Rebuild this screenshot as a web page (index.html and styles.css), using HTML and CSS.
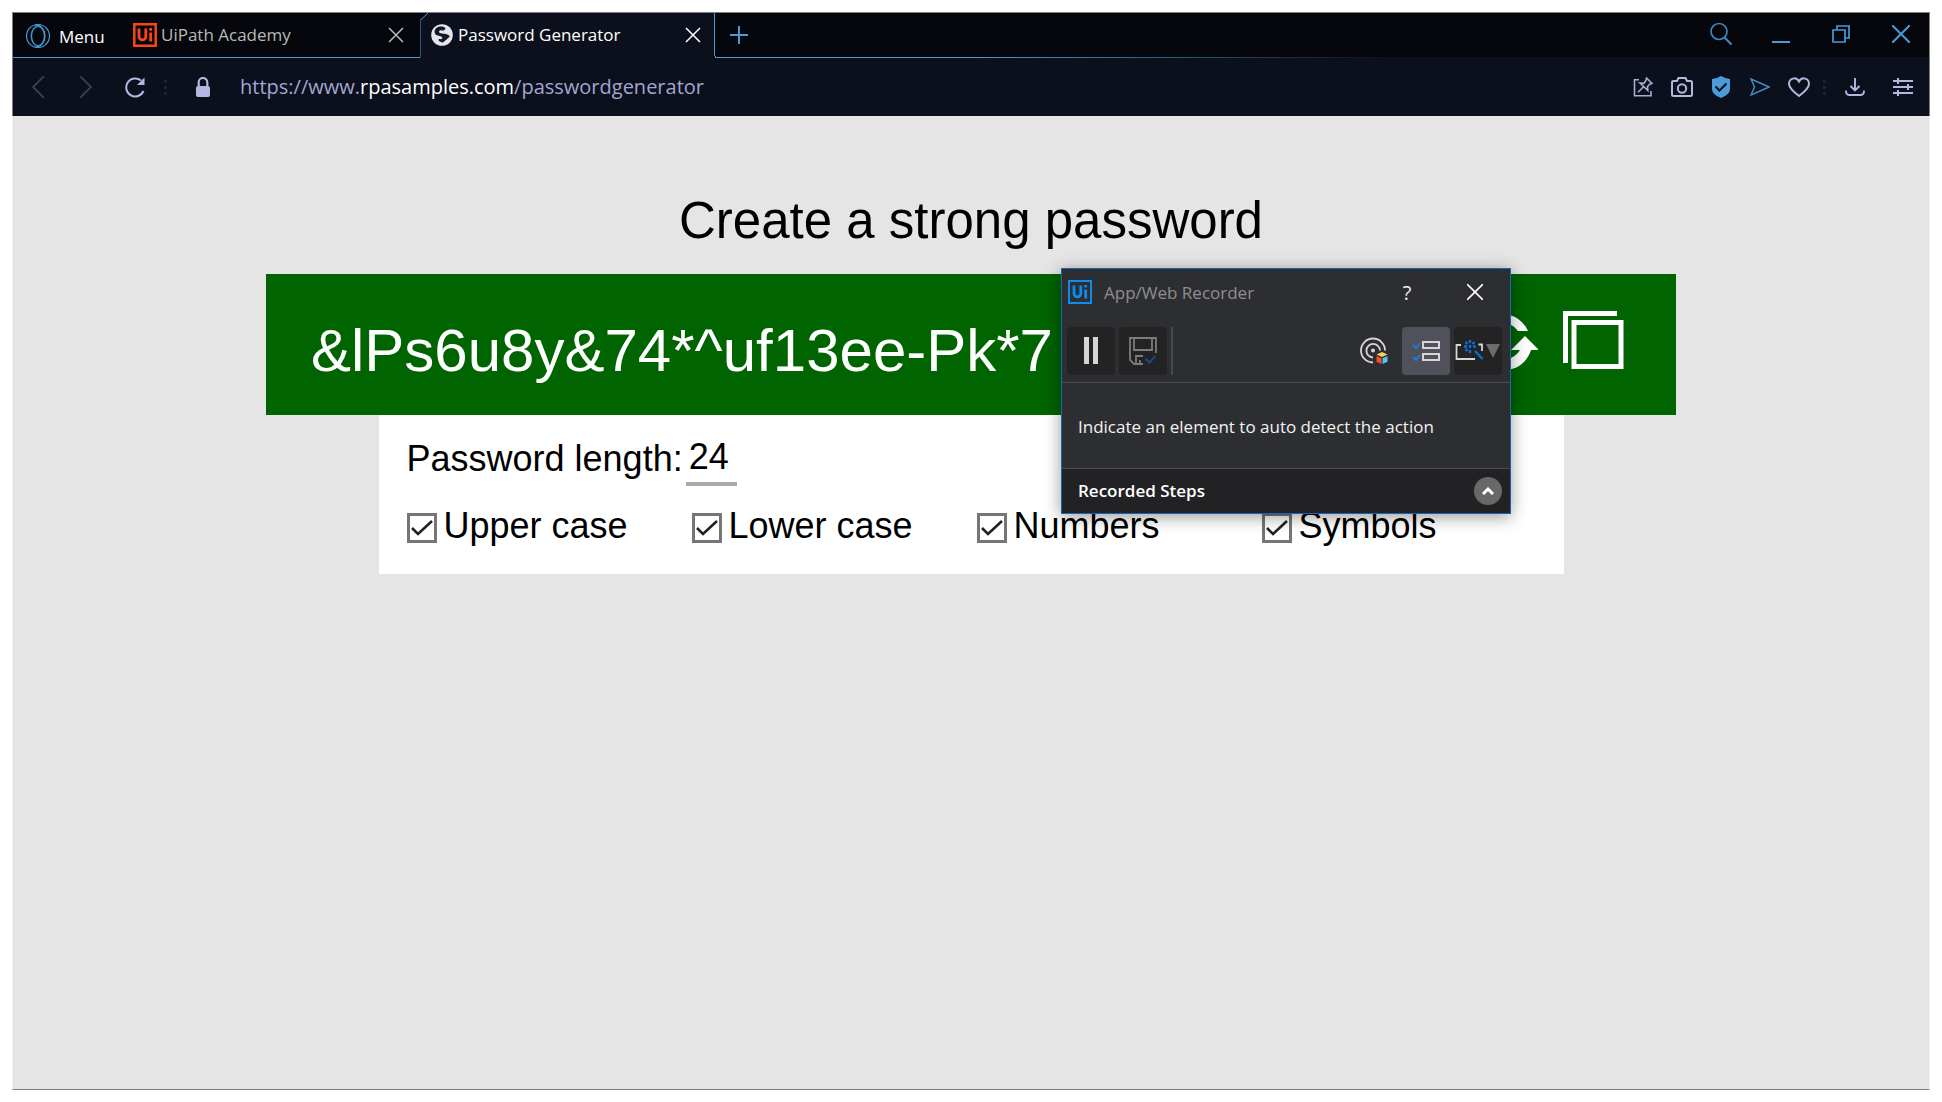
FILE: index.html
```html
<!DOCTYPE html>
<html lang="en">
<head>
<meta charset="utf-8">
<title>Password Generator</title>
<link rel="stylesheet" href="styles.css">
</head>
<body>
<div class="window">
  <header class="chrome">
    <div class="tabbar">
      <button class="menu" type="button">
        <svg width="26" height="26" viewBox="0 0 26 26" fill="none" stroke="#4a9bd8" stroke-width="1.2"><circle cx="13" cy="13" r="11.5"/><ellipse cx="13" cy="13" rx="6.500" ry="9.500"/><path d="M10 1.800C17 2 20 8 20 13s-3 11-10 11.200"/><path d="M16 1.800C9 2 6 8 6 13s3 11 10 11.200" opacity=".5"/></svg>
        <span>Menu</span>
      </button>
      <div class="tab">
        <svg class="logo" width="24" height="24" viewBox="0 0 24 24"><path fill="none" stroke="#fa4616" stroke-width="2.500" d="M1.300 1.300h21.400v21.400H1.300z"/><path fill="none" stroke="#fa4616" stroke-width="2.800" d="M6 5.500v8a3.400 3.400 0 0 0 6.800 0v-8M17.700 9.500V18.500M17.700 5v2.700"/></svg>
        <span class="tab-title">UiPath Academy</span>
        <button class="tab-close" type="button" aria-label="Close tab"><svg width="16" height="16" viewBox="0 0 16 16" stroke="currentColor" stroke-width="1.500"><path d="M1 1l14 14M15 1L1 15"/></svg></button>
      </div>
      <div class="tab active">
        <svg class="outline" width="300" height="45" viewBox="0 0 300 45"><path fill="#0c0f1c" d="M0 45V7.500L8 0h287v45z"/><path fill="none" stroke="#4a9bd8" d="M0 44.500V7.500L8 0M294.500 0v42.500l2 2h3.500"/></svg>
        <svg class="logo" width="24" height="24" viewBox="0 0 24 24"><circle cx="12" cy="12" r="10.800" fill="#e3e6ec"/><path fill="#161925" d="M12.500 3.500C8 3 5 5 4.500 8.500c0 2.500 1.500 3.800 4 4.300 2 .4 3.500.7 3.800 1.900.2 1.500-1.500 1.600-3.300 1.300-1 .5-.5 1.500.5 2.300 1.500 1.200 3.500 1.700 4.500.4.800-1.200 2.500-1.700 3.500-3.200 1-.8 2-1.500 2.200-2.300-.7-1.200-2-1.400-3.200-1.900-2-.8-4.300-.3-6.300-1.200-1.200-.6-1.700-1.900-.5-2.700 1.200-.7 2.500.7 3.800 0 1.300-.6 2.600-1.600 1.500-2.700-.6-.7-1.400-1-2.500-1.200z"/></svg>
        <span class="tab-title">Password Generator</span>
        <button class="tab-close" type="button" aria-label="Close tab"><svg width="16" height="16" viewBox="0 0 16 16" stroke="currentColor" stroke-width="1.500"><path d="M1 1l14 14M15 1L1 15"/></svg></button>
      </div>
      <button class="newtab" type="button" aria-label="New tab"><svg width="18" height="18" viewBox="0 0 18 18" stroke="#4a9bd8" stroke-width="2"><path d="M9 0v18M0 9h18"/></svg></button>
      <div class="winctl">
        <button type="button" aria-label="Search tabs"><svg width="24" height="24" viewBox="0 0 24 24" fill="none" stroke="#3f86bb" stroke-width="1.700"><circle cx="10" cy="9.500" r="8"/><path stroke-width="2.200" d="M15.500 15.500l7 7"/></svg></button>
        <button type="button" aria-label="Minimise"><svg width="18" height="18" viewBox="0 0 18 18" stroke="#4a9bd8" stroke-width="2"><path d="M0 17h18"/></svg></button>
        <button type="button" aria-label="Restore"><svg width="18" height="18" viewBox="0 0 18 18" fill="none" stroke="#4a9bd8" stroke-width="1.700"><path d="M1 5h12v12H1zM5 4.500V1h12v12h-3.500"/></svg></button>
        <button type="button" aria-label="Close"><svg width="18" height="18" viewBox="0 0 18 18" stroke="#4a9bd8" stroke-width="2"><path d="M0 0l18 18M18 0L0 18"/></svg></button>
      </div>
    </div>
    <div class="toolbar">
      <button class="nav" type="button" aria-label="Back"><svg width="14" height="22" viewBox="0 0 14 22" fill="none" stroke="#3b3e55" stroke-width="1.800"><path d="M13 0L2 11l11 11"/></svg></button>
      <button class="nav" type="button" aria-label="Forward"><svg width="14" height="22" viewBox="0 0 14 22" fill="none" stroke="#3b3e55" stroke-width="1.800"><path d="M1 0l11 11L1 22"/></svg></button>
      <button class="nav reload" type="button" aria-label="Reload"><svg width="22" height="22" viewBox="0 0 22 22" fill="none" stroke="#b4b7e0" stroke-width="2"><path d="M17 4.500a9 9 0 1 0 2.500 10.500"/><path fill="#b4b7e0" stroke="none" d="M20.500 1.500V9h-7.500z"/></svg></button>
      <svg class="dots" width="3" height="15" viewBox="0 0 3 15" fill="#1e2238"><path d="M0 0h3v3H0zM0 6h3v3H0zM0 12h3v3H0z"/></svg>
      <svg class="lock" width="14" height="20" viewBox="0 0 14 20"><path fill="none" stroke="#b4b7e0" stroke-width="2.200" d="M2.700 10V5.300a4.300 4.300 0 0 1 8.600 0V10"/><rect y="9" width="14" height="11" rx="2" fill="#b4b7e0"/></svg>
      <div class="url">https://www.<b>rpasamples.com</b>/passwordgenerator</div>
      <div class="tools">
        <button type="button" aria-label="Pin page"><svg width="20" height="20" viewBox="0 0 20 20" fill="none" stroke="#a9acd4" stroke-width="1.600"><path d="M6 2.800H1.500v16h16.500V14"/><path d="M13.500 1l5.500 5.500-2 .5-2.500 2.500.3 4L7 6l4 .3L13.200 3zM10.500 9.800L5 15.300"/></svg></button>
        <button type="button" aria-label="Snapshot"><svg width="22" height="20" viewBox="0 0 22 20" fill="none" stroke="#b4b7e0" stroke-width="2"><path d="M2.500 4H6l1.500-3h7L16 4h3.500Q21 4 21 5.500v12q0 1.500-1.500 1.500h-17Q1 19 1 17.500v-12Q1 4 2.500 4z"/><circle cx="11" cy="11.500" r="4.200"/></svg></button>
        <button type="button" aria-label="Blocker"><svg width="18" height="22" viewBox="0 0 18 22"><path fill="#4a9bd8" d="M9 0q4 2.500 9 3v10q0 5.500-9 9-9-3.500-9-9V3q5-.500 9-3z"/><path fill="none" stroke="#0c0f1c" stroke-width="2" d="M3.500 10.500l4 4 7-7"/></svg></button>
        <button type="button" aria-label="My Flow"><svg width="20" height="18" viewBox="0 0 20 18" fill="none" stroke="#4289bd" stroke-width="1.500"><path d="M1 1l18 8L1 17l3.500-8z"/></svg></button>
        <button type="button" aria-label="Bookmark"><svg width="22" height="20" viewBox="0 0 22 20" fill="none" stroke="#b4b7e0" stroke-width="2"><path d="M11 19C5 14.500 1 11 1 6.800 1 1.500 8-1 11 4.500 14-1 21 1.500 21 6.800 21 11 17 14.500 11 19z"/></svg></button>
        <svg class="dots" width="3" height="15" viewBox="0 0 3 15" fill="#1e2238"><path d="M0 0h3v3H0zM0 6h3v3H0zM0 12h3v3H0z"/></svg>
        <button class="wide" type="button" aria-label="Downloads"><svg width="20" height="18" viewBox="0 0 20 18" fill="none" stroke="#b4b7e0" stroke-width="1.900"><path d="M10 0v12M5.500 8l4.500 4.500L14.500 8M1 12.500Q1 17 4 17h12q3 0 3-4.500"/></svg></button>
        <button class="wide" type="button" aria-label="Easy setup"><svg width="20" height="18" viewBox="0 0 20 18" fill="none" stroke="#b4b7e0" stroke-width="2"><path d="M0 3h20M0 9h20M0 15h20M5 0v6M15 6v6M5 12v6"/></svg></button>
      </div>
    </div>
  </header>

  <main class="page">
    <h1>Create a strong password</h1>
    <section class="result">
      <output class="password">&amp;lPs6u8y&amp;74*^uf13ee-Pk*7</output>
      <div class="actions">
        <button type="button" aria-label="Generate again"><svg width="70" height="60" viewBox="0 0 70 60" fill="#fff"><path d="M8 22A28 28 0 0 1 60 21H50A19 19 0 0 0 18 22l6 4H0L14 12zM57 26l14 14h-8A28 28 0 0 1 20 55l6-8A19 19 0 0 0 52 40h-9z"/></svg></button>
        <button type="button" aria-label="Copy password"><svg width="62" height="60" viewBox="0 0 62 60" fill="none" stroke="#fff" stroke-width="5"><path d="M55 3.500H3.500V53M12 12.500h47v44H12z"/></svg></button>
      </div>
    </section>
    <form class="options">
      <div class="length">
        <label for="len">Password length:</label>
        <input id="len" type="text" value="24">
      </div>
      <div class="checks">
        <label><input type="checkbox" checked><span>Upper case</span></label>
        <label><input type="checkbox" checked><span>Lower case</span></label>
        <label><input type="checkbox" checked><span>Numbers</span></label>
        <label><input type="checkbox" checked><span>Symbols</span></label>
      </div>
    </form>
  </main>

  <aside class="recorder">
    <div class="rec-title">
      <svg width="24" height="24" viewBox="0 0 24 24" fill="none" stroke="#0a8cf0"><path stroke-width="2" d="M1 1h22v22H1z"/><path stroke-width="2.800" d="M6 5.500v8a3.400 3.400 0 0 0 6.800 0v-8M17.700 9.500V18.500M17.700 5v2.500"/></svg>
      <span class="rec-name">App/Web Recorder</span>
      <button class="help" type="button">?</button>
      <button class="rec-close" type="button" aria-label="Close recorder"><svg width="16" height="16" viewBox="0 0 16 16" stroke="#fff" stroke-width="1.600"><path d="M0 0l16 16M16 0L0 16"/></svg></button>
    </div>
    <div class="rec-tools">
      <button class="sq" type="button" aria-label="Pause"><svg width="14" height="28" viewBox="0 0 14 28" fill="#d6d6d6"><path d="M0 0h5v27H0zM9 0h5v27H9z"/></svg></button>
      <button class="sq" type="button" aria-label="Save"><svg width="28" height="28" viewBox="0 0 28 28" fill="none" stroke="#7c7c7c" stroke-width="1.800"><path d="M27 16V1H1v22l4 4h9M5 1v12h18V1M7 27v-8h7M11 27v-4"/><path stroke="#1a4a86" stroke-width="2.200" d="M16.500 21.500l4 4 6-6.500"/></svg></button>
      <span class="sep"></span>
      <button class="sq plain" type="button" aria-label="Target"><svg width="28" height="28" viewBox="0 0 28 28" fill="none" stroke="#d6d6d6" stroke-width="1.800"><path d="M13 25.500A12 12 0 1 1 25 13.500"/><path d="M13 20.500A6.800 6.800 0 1 1 20 13.500"/><circle cx="13" cy="13.500" r="2" fill="#d6d6d6" stroke="none"/><g stroke="none"><path fill="#f7d25c" d="M22 15l5.500 2.500L22 20l-5.500-2.500z"/><path fill="#f4511e" d="M16.500 19l5 2.300V27l-5-2.300z"/><path fill="#4fc3f7" d="M27.500 19l-5 2.300V27l5-2.300z"/></g></svg></button>
      <button class="sq on" type="button" aria-label="Steps panel"><svg width="28" height="22" viewBox="0 0 28 22" fill="none" stroke="#d6d6d6" stroke-width="2"><path d="M11 2h16v6H11zM11 14h16v6H11z"/><path stroke="#1c7be0" d="M1 5l3 3 4-5M1 17l3 3 4-5"/></svg></button>
      <button class="sq" type="button" aria-label="Detection mode"><svg width="46" height="24" viewBox="0 0 46 24" fill="none"><path stroke="#d6d6d6" stroke-width="1.800" d="M6 6H1.500v14H20M23.500 5.500H27V12"/><path fill="#6c6c6c" d="M31 5h14l-7 14z"/><g stroke="#0b6fe0" stroke-width="2.400"><path d="M20 12l7.500 8"/><path d="M15 1v3M15 11v3M9 7.500h3M18 7.500h3M10.500 3l2 2M19.500 3l-2 2M10.500 12l2-2M15 6v3"/></g></svg></button>
    </div>
    <p class="rec-hint">Indicate an element to auto detect the action</p>
    <div class="rec-steps">
      <b>Recorded Steps</b>
      <button type="button" aria-label="Expand"><svg width="12" height="8" viewBox="0 0 12 8" fill="none" stroke="#fff" stroke-width="3"><path d="M1 7l5-5 5 5"/></svg></button>
    </div>
  </aside>
</div>
</body>
</html>
```
FILE: styles.css
```css
* { box-sizing: border-box; }

body {
  margin: 0;
  background: #fff;
  font-family: "Liberation Sans", Arial, sans-serif;
}

button {
  display: flex;
  align-items: center;
  justify-content: center;
  padding: 0;
  border: 0;
  background: none;
  color: inherit;
  font: inherit;
}

svg { display: block; flex: none; }

.window {
  position: relative;
  display: flex;
  flex-direction: column;
  min-height: calc(100vh - 24px);
  margin: 12px;
}

/* Browser chrome */
.chrome {
  border: 1px solid #7f7f7f;
  border-bottom: 0;
  background: #0c0f1c;
  font-family: "Open Sans", "Noto Sans", sans-serif;
}

.tabbar {
  display: flex;
  height: 45px;
  background:
    linear-gradient(90deg, #4a9bd8 50%, #0c0f1c 72%) bottom / 100% 1px no-repeat,
    #06070c;
}

.menu {
  width: 112px;
  gap: 8px;
  padding: 0 20px 0 12px;
  justify-content: flex-start;
  color: #fff;
  font-size: 17px;
}

.menu span { padding-top: 2px; }

.tab {
  position: relative;
  display: flex;
  align-items: center;
  width: 295px;
  padding: 0 16px 2px 8px;
  color: #b9b9b9;
  font-size: 17px;
}

.tab.active { padding: 0 14px 2px 10px; color: #fff; }
.outline { position: absolute; inset: 0 auto auto 0; }
.logo, .tab-title, .tab-close { position: relative; }
.tab-title { margin-left: 4px; }
.tab-close { margin-left: auto; }

.newtab { width: 48px; padding-bottom: 2px; }

.winctl {
  display: flex;
  gap: 12px;
  margin-left: auto;
  padding: 0 4px 3px 0;
}

.winctl button { width: 48px; }

.toolbar {
  display: flex;
  align-items: center;
  height: 58px;
  padding: 0 2px 0 18px;
}

.nav { width: 14px; margin-right: 34px; }
.nav.reload { width: 22px; margin: 0 18px 0 -3px; }
.lock { margin: 0 30px 0 29px; }

.url {
  color: #a3a6d2;
  font-size: 20px;
  line-height: 28px;
}

.url b { color: #fff; font-weight: 400; }

.tools {
  display: flex;
  align-items: center;
  margin-left: auto;
}

.tools button { width: 39px; }
.tools .wide { width: 48px; }
.tools .dots { margin: 0 5px; }

/* Generator page */
.page {
  flex: 1;
  padding: 71px 0;
  border: 1px solid #f0f0f0;
  border-top: 0;
  border-bottom-color: #7f7f7f;
  background: #e5e5e5;
}

h1 {
  margin: 0 0 19px;
  font-size: 51px;
  font-weight: 400;
  line-height: 68px;
  text-align: center;
}

.result {
  display: flex;
  align-items: center;
  justify-content: space-between;
  width: 74%;
  max-width: 1410px;
  height: 141px;
  margin: 0 auto;
  padding: 0 52px 0 45px;
  background: #006400;
}

.password {
  padding-top: 12px;
  color: #fff;
  font-size: 60px;
  line-height: 70px;
}

.actions { display: flex; gap: 24px; padding-bottom: 9px; }

.options {
  width: 62%;
  max-width: 1185px;
  margin: 0 auto;
  padding: 20px 17px 27px 28px;
  background: #fff;
  font-size: 36px;
  line-height: 42px;
}

.length { display: flex; align-items: flex-start; }
.length label { padding-top: 3px; }

.length input {
  width: 51px;
  height: 51px;
  margin-left: 3px;
  padding: 0 0 3px 3px;
  border: 0;
  border-bottom: 4px solid #a9a9a9;
  background: none;
  font: inherit;
}

.checks {
  display: grid;
  grid-template-columns: repeat(4, 1fr);
  margin-top: 19px;
}

.checks label { display: flex; align-items: flex-start; }

.checks input {
  flex: none;
  width: 30px;
  height: 30px;
  margin: 8px 7px 0 0;
  appearance: none;
  border: 3px solid #767676;
  background: #fff;
}

.checks input:checked {
  background: #fff url("data:image/svg+xml,%3Csvg xmlns='http://www.w3.org/2000/svg' viewBox='0 0 24 24' fill='none' stroke='%23222' stroke-width='2.600'%3E%3Cpath d='M2 12l6 6L22 5'/%3E%3C/svg%3E");
}

/* Recorder window floating over the page */
.recorder {
  position: absolute;
  top: 256px;
  left: 1049px;
  width: 450px;
  border: 1px solid #1565b8;
  background: #2d2e32;
  box-shadow: 0 3px 16px rgba(0, 0, 0, .4);
  color: #f2f2f2;
  font-family: "Open Sans", "Noto Sans", sans-serif;
  font-size: 17px;
}

.rec-title {
  display: flex;
  align-items: center;
  height: 48px;
  padding: 0 27px 2px 6px;
}

.rec-name { margin: 0 auto 0 12px; color: #8f8f8f; }
.help { width: 12px; margin-right: 54px; font-size: 20px; }

.rec-tools {
  display: flex;
  align-items: center;
  gap: 4px;
  padding: 10px 8px 7px 5px;
  border-bottom: 1px solid #4b4c50;
}

.sq {
  width: 48px;
  height: 48px;
  border-radius: 4px;
  background: #232324;
}

.sq.plain { margin-left: auto; background: none; }
.sq.on { background: #50515b; }
.sep { width: 2px; height: 48px; background: #47484c; }

.rec-hint {
  margin: 0;
  padding: 31px 16px 29px;
  border-bottom: 1px solid #4b4c50;
  line-height: 25px;
}

.rec-steps {
  display: flex;
  align-items: center;
  justify-content: space-between;
  height: 44px;
  padding: 0 8px 0 16px;
  background: #222224;
  color: #fff;
}

.rec-steps b { padding-bottom: 2px; font-weight: 600; }

.rec-steps button {
  width: 28px;
  height: 28px;
  border-radius: 50%;
  background: #686868;
}
```
